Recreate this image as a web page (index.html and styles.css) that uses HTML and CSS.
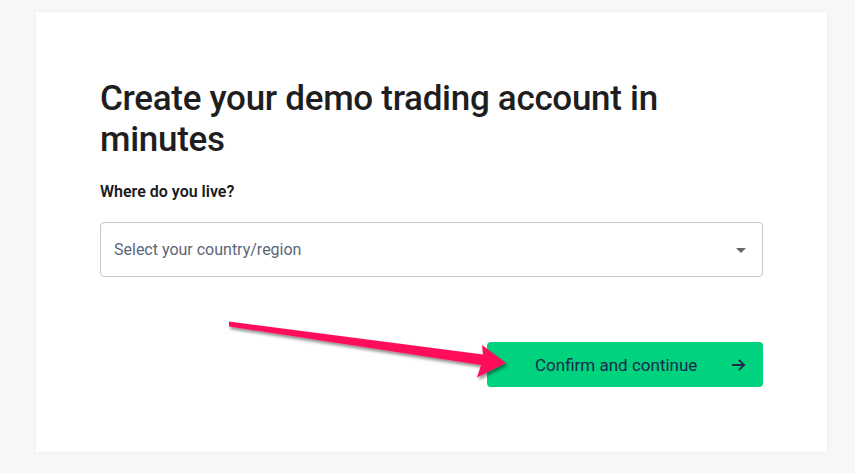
FILE: index.html
```html
<!DOCTYPE html>
<html lang="en">
<head>
    <meta charset="UTF-8">
    <meta name="viewport" content="width=device-width, initial-scale=1.0">
    <title>Create your demo trading account</title>
    <link rel="stylesheet" href="styles.css">
</head>
<body>
    <div class="page">
        <div class="card">
            <h1 class="title">Create your demo trading account in minutes</h1>
            <label class="field-label" for="country">Where do you live?</label>
            <div class="select" id="country">
                <span class="select-placeholder">Select your country/region</span>
                <span class="select-caret"></span>
            </div>
            <div class="actions">
                <button class="btn-confirm">
                    <span>Confirm and continue</span>
                    <svg class="btn-arrow" width="14" height="14" viewBox="0 0 14 14" fill="none">
                        <path d="M1 7h11M7.5 2.5L12 7l-4.5 4.5" stroke="#1a2b4c" stroke-width="1.8" stroke-linecap="square"/>
                    </svg>
                </button>
            </div>
        </div>
    </div>

    <!-- annotation arrow drawn over the page -->
    <svg class="annotation" width="855" height="473" viewBox="0 0 855 473">
        <defs>
            <filter id="arrowShadow" x="-10%" y="-50%" width="120%" height="200%">
                <feDropShadow dx="1.5" dy="2.5" stdDeviation="1.5" flood-color="#000" flood-opacity="0.45"/>
            </filter>
        </defs>
        <polygon filter="url(#arrowShadow)" fill="#ff0f5a"
                 points="229,321.5 483,354.5 482,345 506,363 477,377.5 481,365 229,326.5"/>
    </svg>
</body>
</html>
```

FILE: styles.css
```css
body {
    margin: 0;
    background-color: #f7f8fa;
    font-family: Roboto, "Liberation Sans", sans-serif;
    color: #1d1d1f;
}
.page {
    padding: 12px 28px 21px 36px;
}
.card {
    background-color: #fff;
    box-shadow: 0 0 6px rgba(0, 0, 0, 0.06);
    padding: 66px 64px 65px 64px;
}
.title {
    margin: 0;
    font-size: 35px;
    line-height: 41px;
    letter-spacing: -0.3px;
    font-weight: 500;
    color: #1e1e1e;
    max-width: 600px;
}
.field-label {
    display: block;
    margin-top: 20px;
    font-size: 16px;
    line-height: 24px;
    font-weight: 600;
    color: #1a1a1a;
}
.select {
    margin-top: 18px;
    height: 53px;
    border: 1px solid #c6c6c6;
    border-radius: 4px;
    display: flex;
    align-items: center;
    justify-content: space-between;
    padding: 0 16px 0 13px;
}
.select-placeholder {
    font-size: 16px;
    color: #5b667a;
}
.select-caret {
    width: 0;
    height: 0;
    border-left: 5px solid transparent;
    border-right: 5px solid transparent;
    border-top: 5px solid #666;
    margin-top: 1px;
}
.actions {
    display: flex;
    justify-content: flex-end;
    margin-top: 65px;
}
.btn-confirm {
    width: 276px;
    height: 45px;
    display: flex;
    align-items: center;
    justify-content: space-between;
    padding: 0 17px 0 48px;
    background-color: #00d27e;
    border: none;
    border-radius: 4px;
    font-family: Roboto, "Liberation Sans", sans-serif;
    font-size: 17px;
    color: #1a2b4c;
    cursor: pointer;
}
.btn-arrow {
    display: block;
}
.annotation {
    position: absolute;
    top: 0;
    left: 0;
    pointer-events: none;
}
```
